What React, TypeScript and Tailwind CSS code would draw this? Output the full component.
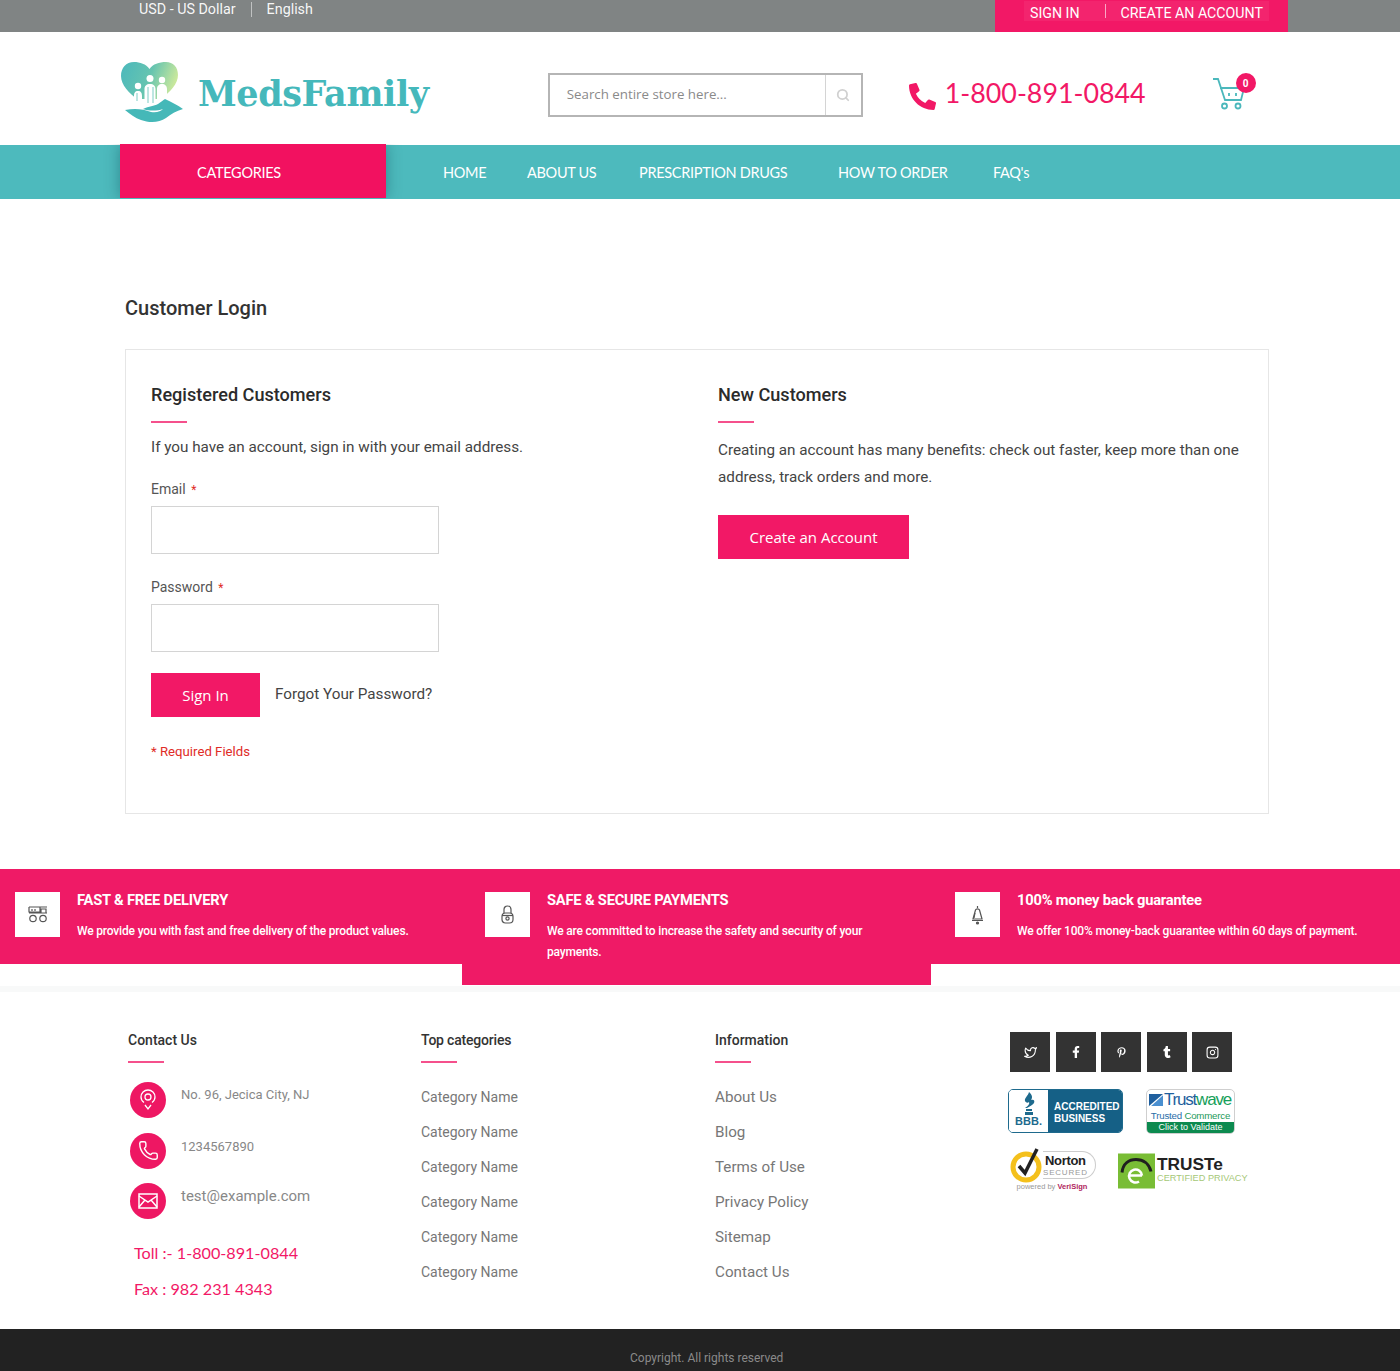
import { FaFacebookF, FaPhoneAlt, FaPinterestP, FaTumblr } from "react-icons/fa";
import { FiInstagram, FiTwitter } from "react-icons/fi";
import { Phone, Search } from "lucide-react";

const roboto = "font-['Roboto',sans-serif]";
const lato = "font-['Lato',sans-serif]";
const openSans = "font-['Open_Sans',sans-serif]";

function Logo() {
    return (
        <svg width="64" height="62" viewBox="0 0 64 62" className="shrink-0">
            <defs>
                <linearGradient id="heart" x1="0" y1="0" x2="1" y2="0.3">
                    <stop offset="0" stopColor="#4bb8bc" />
                    <stop offset="0.55" stopColor="#66c4b0" />
                    <stop offset="1" stopColor="#c9e89c" />
                </linearGradient>
            </defs>
            <path d="M28.5 7C25 2 19 0 13 0 5 0 0 6 0 14c0 9 8 17 17 24l11 6 12-7c9-7 17-15 17-24 0-8-5-13-12-13-7 0-13 2-16.500 7z" fill="url(#heart)" />
            <circle cx="29" cy="16.500" r="3.500" fill="#fff" />
            <circle cx="17" cy="24" r="3.200" fill="#fff" />
            <circle cx="41" cy="18" r="3.200" fill="#fff" />
            <path d="M13 34c0-3 1-5 4-5s4 2 4 5v10h-8zM23.500 27c0-3 2-5 5.500-5s5.500 2 5.500 5v17h-11zM36 27c0-3 2-5 5-5s5 2 5 5v10l-5 7h-5z" fill="#fff" />
            <path d="M15 37h30v7H15z" fill="#fff" />
            <path d="M16 31v8M27 25v16M32 25v16" stroke="#5cc0b6" strokeWidth="0.8" />
            <path d="M4 48C14 46 22 47 30 50 36 51 40 49 42 47 36 49 28 49 22 47 28 44 33 44 37 42 40 40 42 38 44 37 50 40 57 43 62 47 55 49 50 52 45 56 38 61 28 61 20 58 14 56 9 52 4 48z" fill="#45b8b8" />
        </svg>
    );
}

function TopBar() {
    return (
        <div className={`flex h-8 items-start justify-between bg-[#808484] pl-[139px] pr-[112px] text-white ${roboto}`}>
            <div className="flex items-center text-[14.300px] leading-[18px] text-white/95">
                <span>USD - US Dollar</span>
                <span className="mx-[15px] h-[15px] w-px bg-white/50" />
                <span>English</span>
            </div>
            <div className="flex h-8 w-[293px] justify-start bg-[#f21866] pl-[29px] pt-[1px]">
                <div className="flex h-5 items-center bg-white/5 pl-[6px] pr-[6px] pt-[5px] text-[14.200px] leading-[17px]">
                    <span>SIGN IN</span>
                    <span className="ml-[25px] mr-[15px] mt-[-5px] h-[14px] w-px bg-white/60" />
                    <span>CREATE AN ACCOUNT</span>
                </div>
            </div>
        </div>
    );
}

function Header() {
    return (
        <div className="flex h-[113px] items-center pl-[121px] pt-[12px]">
            <div className="mt-[-3px] flex items-center">
                <Logo />
                <span className="ml-[13px] mt-[2px] font-['DejaVu_Serif',serif] text-[35px] font-bold tracking-[-0.400px] text-[#45b8bb]">MedsFamily</span>
            </div>
            <div className="ml-[119px] flex h-11 w-[315px] border-2 border-[#b5b5b5]">
                <div className={`flex flex-1 items-center pl-[17px] text-[13.300px] text-[#8a8a8a] ${openSans}`}>Search entire store here...</div>
                <div className="flex w-[36px] items-center justify-center border-l border-[#d4d4d4]">
                    <Search className="size-[14px] text-[#d0d0d0]" strokeWidth={3} />
                </div>
            </div>
            <FaPhoneAlt className="ml-[46px] mt-[4px] size-[27px] text-[#f21866]" />
            <span className={`ml-[9px] mt-[-2px] text-[26.800px] text-[#f21866] ${lato}`}>1-800-891-0844</span>
            <div className="relative ml-[66px] mt-[3px] h-[36px] w-[40px]">
                <svg width="34" height="34" viewBox="0 0 34 34" fill="none" stroke="#4bb8bc" strokeWidth="1.800">
                    <path d="M1 1h5l7 21h16l3-12H8" />
                    <path d="M13 10h12M17 15v3M24 15v3" />
                    <circle cx="12.500" cy="28" r="2.500" />
                    <circle cx="26" cy="28" r="2.500" />
                </svg>
                <span className={`absolute right-[-4px] top-[-5px] flex size-5 items-center justify-center rounded-full bg-[#f21866] text-[10px] font-bold text-white ${roboto}`}>0</span>
            </div>
        </div>
    );
}

function NavBar() {
    const links = [
        { label: "HOME", width: "w-[141px] pl-[57px]" },
        { label: "ABOUT US", width: "w-[112px]" },
        { label: "PRESCRIPTION DRUGS", width: "w-[199px]" },
        { label: "HOW TO ORDER", width: "w-[155px]" },
        { label: "FAQ's", width: "w-[60px]" },
    ];
    return (
        <div className={`flex h-[54px] items-start bg-[#4dbabd] pl-[120px] text-[14.500px] tracking-[-0.300px] text-white ${lato}`}>
            <div className="-mt-px flex h-[54px] w-[266px] items-center justify-center bg-[#f21160] pr-[28px] pt-[4px] shadow-[0_0_14px_rgba(0,60,70,0.4)] [clip-path:inset(0_-20px_0_-20px)]">CATEGORIES</div>
            <div className="flex h-[54px] items-center pt-[2px]">
                {links.map((link) => (
                    <span key={link.label} className={`shrink-0 ${link.width}`}>{link.label}</span>
                ))}
            </div>
        </div>
    );
}

function Field({ label }: { label: string }) {
    return (
        <div>
            <div className="text-sm leading-5 text-[#555]">
                {label} <span className="ml-[2px] text-xs text-[#e02b27]">*</span>
            </div>
            <div className="mt-[7px] h-[48px] w-[288px] border border-[#d4d4d4]" />
        </div>
    );
}

function LoginPanel() {
    return (
        <div className="mx-[125px] mt-[29px] flex h-[465px] w-[1144px] border border-[#e6e6e6]">
            <div className="w-[592px] pl-[25px] pt-[33px]">
                <h2 className="text-[18.100px] font-medium leading-6 text-[#2b2b2b]">Registered Customers</h2>
                <div className="mt-[14px] h-[2px] w-9 bg-[#f5508c]" />
                <p className="mt-[14px] text-[15.250px] leading-5 text-[#444]">If you have an account, sign in with your email address.</p>
                <div className="mt-[22px]">
                    <Field label="Email" />
                </div>
                <div className="mt-[23px]">
                    <Field label="Password" />
                </div>
                <div className="mt-[21px] flex items-start">
                    <div className={`flex h-11 w-[109px] items-center justify-center bg-[#f21866] text-[15px] text-white ${openSans}`}>Sign In</div>
                    <span className="ml-[15px] mt-[11px] text-[15.250px] leading-5 text-[#444]">Forgot Your Password?</span>
                </div>
                <p className="mt-[25px] text-[13.200px] leading-5 text-[#e02b27]">* Required Fields</p>
            </div>
            <div className="flex-1 pt-[33px]">
                <h2 className="text-[18.100px] font-medium leading-6 text-[#2b2b2b]">New Customers</h2>
                <div className="mt-[14px] h-[2px] w-9 bg-[#f5508c]" />
                <p className="mt-[14px] w-[535px] text-[15.250px] leading-[27px] text-[#444]">
                    Creating an account has many benefits: check out faster, keep more than one address, track orders and more.
                </p>
                <div className={`mt-[24px] flex h-11 w-[191px] items-center justify-center bg-[#f21866] text-[15px] text-white ${openSans}`}>Create an Account</div>
            </div>
        </div>
    );
}

function Truck() {
    return (
        <svg width="20" height="17" viewBox="0 0 20 17" fill="none" stroke="#555" strokeWidth="1.200">
            <path d="M1 1h18M1 1v5h11V1M13 3h5v4h-5zM1 7h18" />
            <path d="M4 3v2M7 3v2" />
            <circle cx="5" cy="12.500" r="3.200" />
            <circle cx="15" cy="12.500" r="3.200" />
        </svg>
    );
}

function Lock() {
    return (
        <svg width="13" height="19" viewBox="0 0 13 19" fill="none" stroke="#555" strokeWidth="1.200">
            <path d="M3 8V4.500C3 2.500 4.500 1 6.500 1S10 2.500 10 4.500V8" />
            <rect x="1" y="8" width="11" height="10" rx="3.500" />
            <path d="M1 10.500h11" />
            <circle cx="6.500" cy="13.500" r="1.600" />
        </svg>
    );
}

function BellIcon() {
    return (
        <svg width="13" height="20" viewBox="0 0 13 20" fill="none" stroke="#555" strokeWidth="1.200">
            <path d="M6.500 1v2M4.500 5c.5-1.500 3.500-1.500 4 0l2.500 9H2z" />
            <path d="M1 15.500h11M4 8l-1 5" />
            <circle cx="6.500" cy="18" r="1" fill="#555" />
        </svg>
    );
}

function Features() {
    const items = [
        { icon: <Truck />, title: "FAST & FREE DELIVERY", text: "We provide you with fast and free delivery of the product values.", box: "h-[95px] pl-[15px]" },
        { icon: <Lock />, title: "SAFE & SECURE PAYMENTS", text: "We are committed to increase the safety and security of your payments.", box: "h-[116px] pl-[23px]" },
        { icon: <BellIcon />, title: "100% money back guarantee", text: "We offer 100% money-back guarantee within 60 days of payment.", box: "h-[95px] pl-[24px]" },
    ];
    return (
        <div className="mt-[55px] grid grid-cols-[462px_469px_469px] items-start">
            {items.map((item) => (
                <div key={item.title} className={`flex bg-[#ef1a66] pt-[23px] text-white ${item.box}`}>
                    <div className="flex h-[45px] w-[45px] shrink-0 items-center justify-center bg-white">{item.icon}</div>
                    <div className="ml-[17px] w-[345px]">
                        <h3 className="text-[14.700px] font-bold leading-4 tracking-[-0.200px]">{item.title}</h3>
                        <p className={`mt-[13px] text-xs font-medium leading-[21px] tracking-[-0.170px] ${item.title.startsWith("100") ? "w-[360px]" : ""}`}>{item.text}</p>
                    </div>
                </div>
            ))}
        </div>
    );
}

function FooterHeading({ title, className }: { title: string; className?: string }) {
    return (
        <>
            <h4 className={`text-sm font-medium leading-5 text-[#333] ${className ?? ""}`}>{title}</h4>
            <div className="mt-[11px] h-[2px] w-9 bg-[#f5508c]" />
        </>
    );
}

function LinkColumn({ title, links, className, headingClass, listClass }: { title: string; links: string[]; className: string; headingClass?: string; listClass: string }) {
    return (
        <div className={className}>
            <FooterHeading title={title} className={headingClass} />
            <ul className={`mt-[24px] flex flex-col gap-[15px] leading-5 text-[#777] ${listClass}`}>
                {links.map((link, i) => (
                    <li key={i}>{link}</li>
                ))}
            </ul>
        </div>
    );
}

function Badges() {
    return (
        <div className="ml-[-2px] w-[245px] font-['Liberation_Sans',sans-serif]">
            <div className="mt-[17px] flex items-start">
                <div className="flex h-[44px] w-[115px] overflow-hidden rounded-[5px] border border-[#1e6a8d]">
                    <div className="flex w-[39px] flex-col items-center bg-white">
                        <svg width="14" height="24" viewBox="0 0 14 24" className="mt-[2px]" fill="#1e6a8d">
                            <path d="M7 0c3 3 4 5 2 8 3-1 4 1 3 3-1 2-4 3-7 5H3c3-2 5-4 4-6-1 1-3 1-4-1C2 6 6 4 7 0z" />
                            <path d="M4 17h6v2H4zM3 20h8v3H3z" />
                        </svg>
                        <span className="mt-[-1px] text-[11px] font-bold leading-3 text-[#1e6a8d]">BBB.</span>
                    </div>
                    <div className="flex flex-1 flex-col justify-center bg-[#156086] pl-[6px] pt-[3px] text-[10px] font-bold leading-[12px] text-white">
                        <span>ACCREDITED</span>
                        <span>BUSINESS</span>
                    </div>
                </div>
                <div className="ml-[23px] flex h-[45px] w-[89px] flex-col overflow-hidden rounded-[5px] border border-[#cfcfcf]">
                    <div className="flex h-[20px] items-center pl-[2px]">
                        <svg width="14" height="12" viewBox="0 0 13 11"><path d="M0 0h13L0 11z" fill="#1f5f9e" /><path d="M13 1v10H2z" fill="#4a8fd0" /></svg>
                        <span className="ml-px text-[17px] leading-5 tracking-[-1.200px] text-[#1f5f9e]">Trust<span className="text-[#16a05a]">wave</span></span>
                    </div>
                    <div className="mx-[3px] h-px bg-[#1f5f9e]" />
                    <div className="text-center text-[9.700px] leading-[12px] tracking-[-0.200px] text-[#2a6ea8]">Trusted <span className="text-[#1d9a5a]">Commerce</span></div>
                    <div className="flex-1 bg-[#0c8a4f] text-center text-[9px] leading-[11px] text-white">Click to Validate</div>
                </div>
            </div>
            <div className="mt-[12px] flex items-start">
                <div className="ml-[2px] w-[84px]">
                    <div className="flex h-[38px] items-center">
                        <svg width="36" height="38" viewBox="0 0 36 38" className="shrink-0">
                            <circle cx="16" cy="21" r="13" fill="#fff" stroke="#f4c01c" strokeWidth="5" />
                            <path d="M9 20l6 7L27 3" fill="none" stroke="#222" strokeWidth="3.500" />
                        </svg>
                        <div className="ml-[-3px] flex h-[28px] flex-col items-center rounded-r-[14px] border border-l-0 border-[#ccc] pr-[7px] pt-[1px] leading-none">
                            <span className="text-[13px] font-bold leading-[15px] tracking-[-0.300px] text-[#222]">Norton</span>
                            <span className="text-[8px] leading-[9px] tracking-[0.800px] text-[#999]">SECURED</span>
                        </div>
                    </div>
                    <div className="mt-[-1px] whitespace-nowrap text-center text-[7.500px] leading-[8px] text-[#999]">
                        powered by <span className="font-bold text-[#b0245c]">VeriSign</span>
                    </div>
                </div>
                <div className="ml-[24px] mt-[7px] flex items-center">
                    <svg width="37" height="36" viewBox="0 0 37 35" className="shrink-0">
                        <rect width="37" height="35" fill="#79bd35" />
                        <path d="M4 19c1-9 7-13 14-13s13 4 15 12" fill="none" stroke="#1f1f1f" strokeWidth="3" />
                        <path d="M24 22a6.500 6.500 0 1 0-3 6M12 22h12" fill="none" stroke="#fff" strokeWidth="2.500" />
                    </svg>
                    <div className="ml-[2px] mt-[-3px] flex flex-col gap-px">
                        <span className="text-[17.300px] font-bold leading-[16px] text-[#222]">TRUSTe</span>
                        <span className="whitespace-nowrap text-[9.200px] leading-[10px] text-[#a6c878]">CERTIFIED PRIVACY</span>
                    </div>
                </div>
            </div>
        </div>
    );
}

function Footer() {
    const contacts = [
        {
            icon: (
                <svg width="16" height="22" viewBox="0 0 16 22" fill="none" stroke="#fff" strokeWidth="1.300">
                    <path d="M4 13.500C2.200 12.200 1 10.200 1 8a7 7 0 0 1 14 0c0 2.200-1.200 4.200-3 5.500" />
                    <circle cx="8" cy="8" r="3" />
                    <path d="M5 16l3 4 3-4" />
                </svg>
            ),
            text: "No. 96, Jecica City, NJ",
            cls: "mt-[3px] text-[13px]",
        },
        { icon: <Phone className="size-[21px]" strokeWidth={1.600} />, text: "1234567890", cls: "mt-[4px] text-[13px]" },
        {
            icon: (
                <svg width="20" height="16" viewBox="0 0 20 16" fill="none" stroke="#fff" strokeWidth="1.500">
                    <rect x="1" y="1" width="18" height="14" />
                    <path d="M1 3l9 6 9-6M1 14l6-7M19 14l-6-7" />
                </svg>
            ),
            text: "test@example.com",
            cls: "mt-[3px] text-[15px]",
        },
    ];
    const social = [
        <FiTwitter key="t" className="size-[13px]" />,
        <FaFacebookF key="f" className="size-[12px]" />,
        <FaPinterestP key="p" className="size-[11px]" />,
        <FaTumblr key="u" className="size-[12px]" />,
        <FiInstagram key="i" className="size-[13px]" />,
    ];
    return (
        <div className="mt-px border-t-[6px] border-[#f8f9f9]">
            <div className="flex h-[337px] pl-[128px] pt-[38px]">
                <div className="w-[293px]">
                    <FooterHeading title="Contact Us" />
                    <div className="ml-[2px] mt-[19px] flex flex-col gap-[14.500px]">
                        {contacts.map((item) => (
                            <div key={item.text} className="flex items-start">
                                <div className="flex size-9 shrink-0 items-center justify-center rounded-full bg-[#ee1763] text-white">{item.icon}</div>
                                <span className={`ml-[15px] leading-5 text-[#888] ${item.cls}`}>{item.text}</span>
                            </div>
                        ))}
                    </div>
                    <div className={`ml-[6px] mt-[24px] flex flex-col gap-[16px] text-[16.200px] leading-5 text-[#f21866] ${lato}`}>
                        <span>Toll :- 1-800-891-0844</span>
                        <span>Fax : 982 231 4343</span>
                    </div>
                </div>
                <LinkColumn className="w-[294px]" headingClass="tracking-[-0.200px]" listClass="text-sm" title="Top categories" links={Array(6).fill("Category Name")} />
                <LinkColumn className="w-[295px]" listClass="text-[15.200px]" title="Information" links={["About Us", "Blog", "Terms of Use", "Privacy Policy", "Sitemap", "Contact Us"]} />
                <div>
                    <div className="mt-[2px] flex gap-[5.600px]">
                        {social.map((icon) => (
                            <div key={icon.key} className="flex h-10 w-10 items-center justify-center bg-[#333] text-white">{icon}</div>
                        ))}
                    </div>
                    <Badges />
                </div>
            </div>
            <div className="flex h-[42px] justify-start bg-[#222] pl-[630px] pt-[21px] text-xs text-[#8a8a8a]">Copyright. All rights reserved</div>
        </div>
    );
}

export default function App() {
    return (
        <div className={`h-[1371px] w-[1400px] overflow-hidden bg-white ${roboto}`}>
            <TopBar />
            <Header />
            <NavBar />
            <h1 className="ml-[125px] mt-[97px] text-xl font-medium leading-6 text-[#333]">Customer Login</h1>
            <LoginPanel />
            <Features />
            <Footer />
        </div>
    );
}
